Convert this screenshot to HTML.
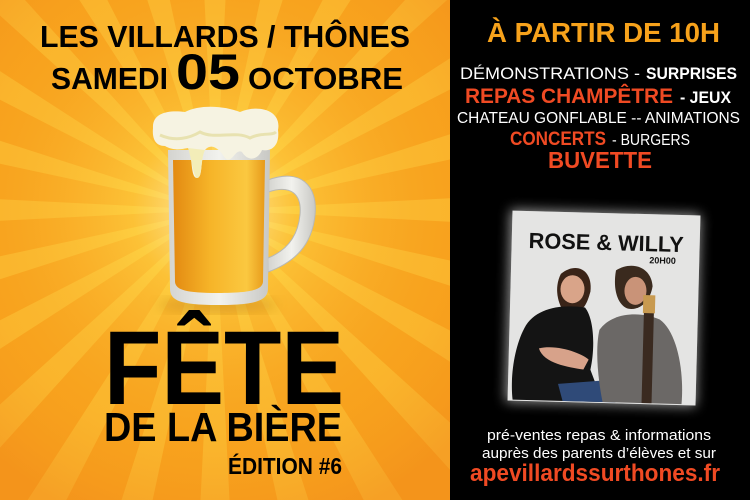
<!DOCTYPE html>
<html><head><meta charset="utf-8"><style>
html,body{margin:0;padding:0;background:#000;width:750px;height:500px;overflow:hidden}
svg{display:block}
text{font-family:"Liberation Sans","DejaVu Sans",sans-serif}
</style></head><body>
<svg width="750" height="500" viewBox="0 0 750 500" xmlns="http://www.w3.org/2000/svg">
<defs>
<radialGradient id="glow" cx="215" cy="210" r="330" gradientUnits="userSpaceOnUse">
<stop offset="0" stop-color="#fff6c8" stop-opacity="0.95"/>
<stop offset="0.25" stop-color="#ffd84a" stop-opacity="0.55"/>
<stop offset="0.7" stop-color="#f7981c" stop-opacity="0.25"/>
<stop offset="1" stop-color="#f08218" stop-opacity="0.5"/>
</radialGradient>
<linearGradient id="beer" x1="0" x2="1">
<stop offset="0" stop-color="#e38a12"/><stop offset="0.4" stop-color="#f6b428"/><stop offset="0.8" stop-color="#fbc840"/><stop offset="1" stop-color="#e79a1a"/>
</linearGradient>
<linearGradient id="glass" x1="0" x2="1">
<stop offset="0" stop-color="#d4d4d0"/><stop offset="0.5" stop-color="#f2f2ee"/><stop offset="1" stop-color="#c8c8c4"/>
</linearGradient>
<filter id="blur"><feGaussianBlur stdDeviation="6"/></filter>
<clipPath id="left"><rect width="450" height="500"/></clipPath>
</defs>
<g clip-path="url(#left)">
<rect width="450" height="500" fill="#f8a61e"/>
<g transform="translate(215,210)" fill="#fbbf32">
<path id="ray" d="M0 0 L600 -30 L600 30Z"/>
<use href="#ray" transform="rotate(15)"/><use href="#ray" transform="rotate(30)"/><use href="#ray" transform="rotate(45)"/><use href="#ray" transform="rotate(60)"/><use href="#ray" transform="rotate(75)"/><use href="#ray" transform="rotate(90)"/><use href="#ray" transform="rotate(105)"/><use href="#ray" transform="rotate(120)"/><use href="#ray" transform="rotate(135)"/><use href="#ray" transform="rotate(150)"/><use href="#ray" transform="rotate(165)"/><use href="#ray" transform="rotate(180)"/><use href="#ray" transform="rotate(195)"/><use href="#ray" transform="rotate(210)"/><use href="#ray" transform="rotate(225)"/><use href="#ray" transform="rotate(240)"/><use href="#ray" transform="rotate(255)"/><use href="#ray" transform="rotate(270)"/><use href="#ray" transform="rotate(285)"/><use href="#ray" transform="rotate(300)"/><use href="#ray" transform="rotate(315)"/><use href="#ray" transform="rotate(330)"/><use href="#ray" transform="rotate(345)"/>
</g>
<rect width="450" height="500" fill="url(#glow)"/>
</g>
<!-- mug -->
<ellipse cx="218" cy="305" rx="60" ry="8" fill="#b07010" opacity="0.35" filter="url(#blur)"/>
<path d="M268 180 C300 168 318 185 315 215 C312 245 295 262 268 272 L268 258 C288 250 298 235 300 215 C302 195 292 184 268 192Z" fill="url(#glass)" stroke="#b8b8b4" stroke-width="1"/>
<path d="M168 150 L270 150 L268 288 C268 300 258 305 218 305 C178 305 170 300 170 288Z" fill="url(#glass)"/>
<path d="M173 160 L265 160 L263 282 C262 290 250 293 218 293 C186 293 176 290 175 282Z" fill="url(#beer)"/>
<path d="M153 128 C152 112 170 110 185 112 C200 104 225 106 240 112 C258 104 282 110 278 130 C280 145 272 152 262 150 C258 160 248 162 242 152 C235 148 232 165 225 158 C220 150 212 142 205 150 C200 160 203 178 197 178 C190 178 193 155 188 148 C178 150 172 150 165 146 C155 146 152 138 153 128Z" fill="#f6f3e2"/>
<path d="M188 148 C192 160 193 175 197 178 C203 178 200 160 205 150Z" fill="#f3edb8"/>
<path d="M160 135 C175 142 190 138 200 132 C215 140 235 130 250 138 C262 132 272 136 276 132" stroke="#e8e2b0" stroke-width="3" fill="none"/>
<!-- top text -->
<text x="40" y="47" font-size="31" font-weight="bold" textLength="370" lengthAdjust="spacingAndGlyphs" fill="#000">LES VILLARDS / THÔNES</text>
<text x="51" y="89" font-size="31" font-weight="bold" fill="#000" textLength="117" lengthAdjust="spacingAndGlyphs">SAMEDI</text>
<text x="176" y="89" font-size="50" font-weight="bold" fill="#000" textLength="64" lengthAdjust="spacingAndGlyphs">05</text>
<text x="248" y="89" font-size="31" font-weight="bold" fill="#000" textLength="155" lengthAdjust="spacingAndGlyphs">OCTOBRE</text>
<!-- title -->
<text x="104" y="404" font-size="105" font-weight="bold" fill="#000" textLength="240" lengthAdjust="spacingAndGlyphs">FÊTE</text>
<text x="104" y="441" font-size="41" font-weight="bold" fill="#000" textLength="238" lengthAdjust="spacingAndGlyphs">DE LA BIÈRE</text>
<text x="228" y="474" font-size="23" font-weight="bold" fill="#000" textLength="114" lengthAdjust="spacingAndGlyphs">ÉDITION #6</text>
<!-- right -->
<rect x="450" width="300" height="500" fill="#000"/>
<text x="487" y="42" font-size="28" font-weight="bold" fill="#f7a21b" textLength="233" lengthAdjust="spacingAndGlyphs">À PARTIR DE 10H</text>
<text x="460" y="79" font-size="17" fill="#fff" textLength="180" lengthAdjust="spacingAndGlyphs">DÉMONSTRATIONS -</text>
<text x="646" y="79" font-size="17" font-weight="bold" fill="#fff" textLength="91" lengthAdjust="spacingAndGlyphs">SURPRISES</text>
<text x="465" y="103" font-size="21" font-weight="bold" fill="#f04a23" textLength="208" lengthAdjust="spacingAndGlyphs">REPAS CHAMPÊTRE</text>
<text x="680" y="103" font-size="17" font-weight="bold" fill="#fff" textLength="51" lengthAdjust="spacingAndGlyphs">- JEUX</text>
<text x="457" y="123" font-size="16" fill="#fff" textLength="283" lengthAdjust="spacingAndGlyphs">CHATEAU GONFLABLE -- ANIMATIONS</text>
<text x="510" y="145" font-size="19" font-weight="bold" fill="#f04a23" textLength="96" lengthAdjust="spacingAndGlyphs">CONCERTS</text>
<text x="612" y="145" font-size="16" fill="#fff" textLength="78" lengthAdjust="spacingAndGlyphs">- BURGERS</text>
<text x="548" y="168" font-size="23" font-weight="bold" fill="#f04a23" textLength="104" lengthAdjust="spacingAndGlyphs">BUVETTE</text>
<!-- photo -->
<g transform="rotate(1.5 603 308)">
<rect x="508" y="212" width="190" height="192" fill="#fff" filter="url(#blur)" opacity="0.6"/>
<rect x="510" y="213" width="188" height="190" fill="#ededeb"/>
<rect x="510" y="213" width="188" height="190" fill="#d8d8d6" opacity="0.4"/>
<text x="527" y="250" font-size="22" font-weight="bold" fill="#111" textLength="155" lengthAdjust="spacingAndGlyphs">ROSE &amp; WILLY</text>
<text x="648" y="262" font-size="9" font-weight="bold" fill="#111">20H00</text>
<path d="M560 275 C575 262 592 270 590 292 C588 300 585 310 578 312 L565 315 C558 305 553 290 560 275Z" fill="#3a2418"/>
<path d="M525 330 C535 310 560 305 585 308 C595 320 596 350 592 370 L605 402 L515 402 C512 380 515 350 525 330Z" fill="#141414"/>
<ellipse cx="572" cy="290" rx="12" ry="14" fill="#d9a489"/>
<path d="M540 350 C560 345 585 355 590 360 L585 370 C570 368 545 365 540 350Z" fill="#d7a28a"/>
<path d="M560 385 L610 380 L618 402 L565 402Z" fill="#2f4a78"/>
<path d="M615 270 C630 260 650 265 652 285 C650 300 640 310 628 308 C618 305 612 290 615 270Z" fill="#3a2a1e"/>
<ellipse cx="635" cy="290" rx="11" ry="14" fill="#c99378"/>
<path d="M600 330 C612 312 640 310 660 318 C678 330 686 370 684 402 L605 402 C600 380 596 350 600 330Z" fill="#6b6866"/>
<rect x="644" y="295" width="10" height="107" fill="#3a2a20"/>
<rect x="643" y="294" width="12" height="18" fill="#c89a50"/>
</g>
<text x="487" y="440" font-size="15" fill="#fff" textLength="224" lengthAdjust="spacingAndGlyphs">pré-ventes repas  &amp; informations</text>
<text x="482" y="458" font-size="15" fill="#fff" textLength="234" lengthAdjust="spacingAndGlyphs">auprès des parents d’élèves et sur</text>
<text x="470" y="481" font-size="24" font-weight="bold" fill="#f04a23" textLength="250" lengthAdjust="spacingAndGlyphs">apevillardssurthones.fr</text>
</svg>
</body></html>
